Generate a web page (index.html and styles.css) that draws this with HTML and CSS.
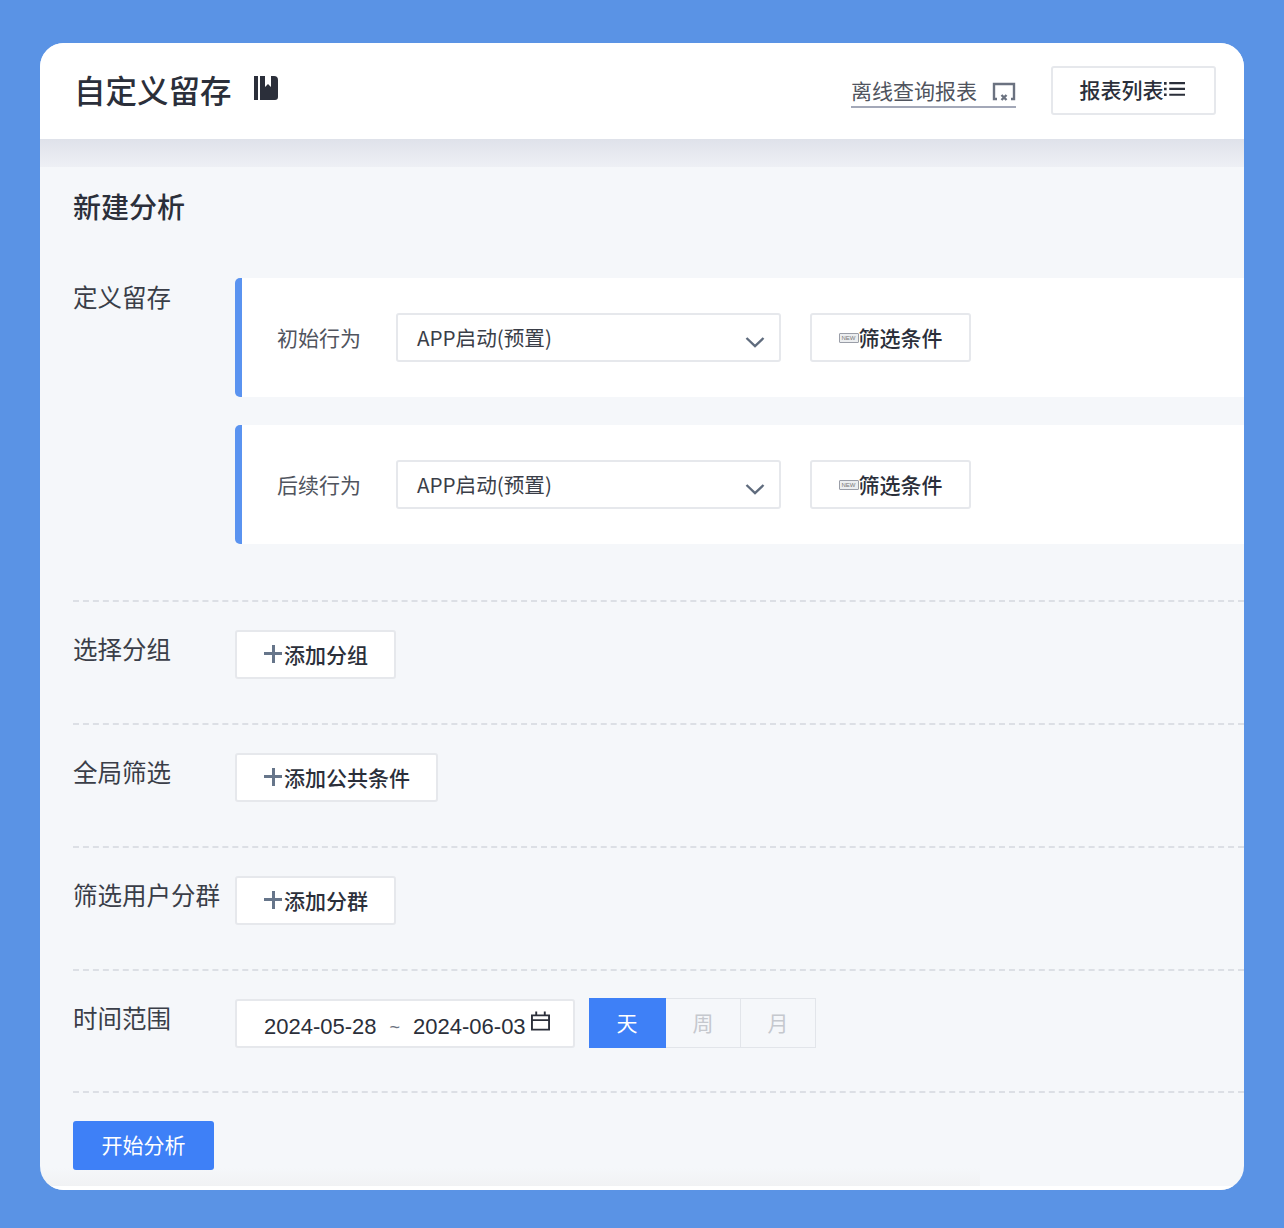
FILE: index.html
```html
<!DOCTYPE html>
<html lang="zh-CN">

<head>
  <meta charset="UTF-8">
  <title>自定义留存</title>
  <link rel="stylesheet" href="styles.css">
</head>

<body>
  <div class="card">
    <div class="header">
      <h1 class="title">自定义留存</h1>
      <svg class="book-icon" width="24" height="26" viewBox="0 0 24 26">
        <path fill="#2b2f3a" d="M0 1h4v24H0zM6 1h5v11l3-3 3 3V1h3a4 4 0 0 1 4 4v17a3 3 0 0 1-3 3H6z" />
      </svg>
      <a class="offline-link">离线查询报表
        <svg width="24" height="22" viewBox="0 0 24 22" fill="none" stroke="#6b7280" stroke-width="2.400">
          <path d="M5 18H2V3h20v15h-3" />
          <path d="M9.500 14l5 5M14.500 14l-5 5" />
        </svg>
      </a>
      <button class="btn list-btn">报表列表
        <svg width="21" height="16" viewBox="0 0 24 18" fill="#2b2f3a">
          <path d="M0 1h3v3H0zM0 7.500h3v3H0zM0 14h3v3H0zM6 1h18v2.500H6zM6 7.700h18v2.500H6zM6 14.300h18v2.500H6z" />
        </svg>
      </button>
    </div>
    <div class="header-shadow"></div>

    <div class="content">
      <h2 class="page-title">新建分析</h2>

      <div class="section section-define">
        <div class="label">定义留存</div>
        <div class="behaviors">
          <div class="behavior">
            <span class="behavior-name">初始行为</span>
            <div class="select">APP启动(预置)
              <svg class="chevron" width="20" height="12" viewBox="0 0 20 12" fill="none" stroke="#5f6b7d" stroke-width="2.400">
                <path d="M1.500 2l8.500 8 8.500-8" />
              </svg>
            </div>
            <button class="btn filter-btn">
              <span class="new-tag">NEW</span>筛选条件
            </button>
          </div>
          <div class="behavior">
            <span class="behavior-name">后续行为</span>
            <div class="select">APP启动(预置)
              <svg class="chevron" width="20" height="12" viewBox="0 0 20 12" fill="none" stroke="#5f6b7d" stroke-width="2.400">
                <path d="M1.500 2l8.500 8 8.500-8" />
              </svg>
            </div>
            <button class="btn filter-btn">
              <span class="new-tag">NEW</span>筛选条件
            </button>
          </div>
        </div>
      </div>

      <div class="section">
        <div class="label">选择分组</div>
        <button class="btn add-btn"><span class="plus"></span>添加分组</button>
      </div>

      <div class="section">
        <div class="label">全局筛选</div>
        <button class="btn add-btn"><span class="plus"></span>添加公共条件</button>
      </div>

      <div class="section">
        <div class="label">筛选用户分群</div>
        <button class="btn add-btn"><span class="plus"></span>添加分群</button>
      </div>

      <div class="section section-time">
        <div class="label">时间范围</div>
        <div class="date-range">
          <span>2024-05-28</span>
          <span class="tilde">~</span>
          <span>2024-06-03</span>
          <svg class="calendar" width="19" height="21" viewBox="0 0 20 21" fill="none" stroke="#2b2f3a" stroke-width="2">
            <path d="M1 4h18v15H1zM1 9h18M5.500 0v5M14.500 0v5" />
          </svg>
        </div>
        <div class="tabs">
          <div class="tab active">天</div>
          <div class="tab">周</div>
          <div class="tab">月</div>
        </div>
      </div>

      <div class="section-last">
        <button class="start-btn">开始分析</button>
      </div>
    </div>
    <div class="foot"></div>
  </div>
</body>

</html>
```

FILE: styles.css
```css
* {
  box-sizing: border-box;
}

body {
  font-family: "Noto Sans CJK SC", "Noto Sans", sans-serif;
  background-color: #5a93e5;
  margin: 0;
  padding: 43px 40px 38px;
  height: 1228px;
  overflow: hidden;
  color: #2b2f3a;
}

.card {
  height: 1147px;
  background: #f5f7fa;
  border-radius: 24px;
  overflow: hidden;
  display: flex;
  flex-direction: column;
}

.header {
  height: 96px;
  flex-shrink: 0;
  background: white;
  display: flex;
  align-items: center;
  padding: 0 28px 0 34px;
}

.title {
  font-size: 31.500px;
  font-weight: 500;
  line-height: 40px;
  margin: -4px 0 0;
  color: #2b2f3a;
}

.book-icon {
  margin: -6px 0 0 22px;
}

.offline-link {
  margin-left: auto;
  display: flex;
  align-items: center;
  gap: 15px;
  height: 34px;
  margin-top: -1px;
  border-bottom: 2px solid #a3a8b8;
  font-size: 21px;
  color: #50545e;
}

.offline-link svg {
  margin-top: 5px;
}

.btn {
  font-family: inherit;
  font-size: 21px;
  font-weight: 500;
  color: #2b2f3a;
  height: 49px;
  padding: 0 0 2px;
  background: white;
  border: 2px solid #e6e8ec;
  border-radius: 3px;
  display: flex;
  align-items: center;
  justify-content: center;
}

.list-btn {
  width: 165px;
  margin-left: 35px;
  margin-top: -2px;
}

.list-btn svg {
  margin-right: 3px;
}

.header-shadow {
  height: 28px;
  flex-shrink: 0;
  background: linear-gradient(#dfe2ea, #eef0f5);
}

.content {
  flex: 1;
  padding-left: 33px;
  background: linear-gradient(rgba(241, 242, 244, 0), #f1f2f4) left bottom / 940px 18px no-repeat;
}

.page-title {
  font-size: 28px;
  font-weight: 500;
  line-height: 40px;
  margin: 19px 0 52px;
  color: #2b2f3a;
}

.section {
  display: flex;
  align-items: flex-start;
  height: 123px;
  padding-top: 27px;
  border-bottom: 2px dashed #dcdfe5;
}

.section-define {
  height: 324px;
  padding-top: 0;
}

.section-define .label {
  margin-top: -1px;
}

.section-time {
  height: 122px;
}

.label {
  width: 162px;
  flex-shrink: 0;
  font-size: 24.500px;
  line-height: 40px;
  color: #3a3e48;
}

.behaviors {
  flex: 1;
  display: flex;
  flex-direction: column;
  gap: 28px;
}

.behavior {
  height: 119px;
  background: white;
  border-left: 7px solid #5a93f0;
  border-radius: 5px 0 0 5px;
  display: flex;
  align-items: center;
  padding-left: 35px;
}

.behavior-name {
  width: 119px;
  padding-bottom: 2px;
  font-size: 21px;
  color: #50545e;
}

.select {
  position: relative;
  width: 385px;
  height: 49px;
  background: white;
  border: 2px solid #e6e8ec;
  border-radius: 3px;
  font-size: 20.600px;
  line-height: 44px;
  padding-left: 19px;
  color: #3a3e48;
}

.chevron {
  position: absolute;
  right: 14px;
  top: 21px;
}

.filter-btn {
  width: 161px;
  margin-left: 29px;
}

.new-tag {
  width: 20px;
  height: 10px;
  margin-top: 2px;
  border: 1px solid #9a9ea8;
  border-radius: 1px;
  background: #eceef0;
  font-family: "Liberation Sans", sans-serif;
  font-size: 6px;
  font-weight: 400;
  line-height: 8px;
  text-align: center;
  color: #777;
}

.add-btn {
  padding: 0 26px 2px;
  margin-top: 1px;
}

.plus {
  width: 18px;
  height: 18px;
  margin: 0 2px 0 1px;
  background:
    linear-gradient(#66758a, #66758a) center / 100% 3px no-repeat,
    linear-gradient(#66758a, #66758a) center / 3px 100% no-repeat;
}

.date-range {
  width: 340px;
  height: 49px;
  margin-top: 1px;
  background: white;
  border: 2px solid #e6e8ec;
  border-radius: 3px;
  display: flex;
  align-items: center;
  padding: 7px 0 0 27px;
  font-family: "Liberation Sans", sans-serif;
  font-size: 22px;
  color: #2b2f3a;
}

.tilde {
  margin: 0 13px;
  font-size: 18px;
  color: #6b7280;
}

.calendar {
  margin: -12px 0 0 5px;
}

.tabs {
  display: flex;
  margin-left: 14px;
}

.tab {
  width: 75px;
  height: 50px;
  border: 1px solid #e2e5ea;
  border-left: none;
  font-size: 21px;
  line-height: 46px;
  text-align: center;
  color: #c5c8ce;
}

.tab.active {
  width: 77px;
  background: #3e80f7;
  border-color: #3e80f7;
  color: white;
}

.section-last {
  padding-top: 28px;
}

.start-btn {
  display: block;
  width: 141px;
  height: 49px;
  padding: 0 0 4px;
  background: #3e80f7;
  border: none;
  border-radius: 3px;
  font-family: inherit;
  font-size: 21px;
  color: white;
}

.foot {
  height: 4px;
  flex-shrink: 0;
  background: white;
}
```
